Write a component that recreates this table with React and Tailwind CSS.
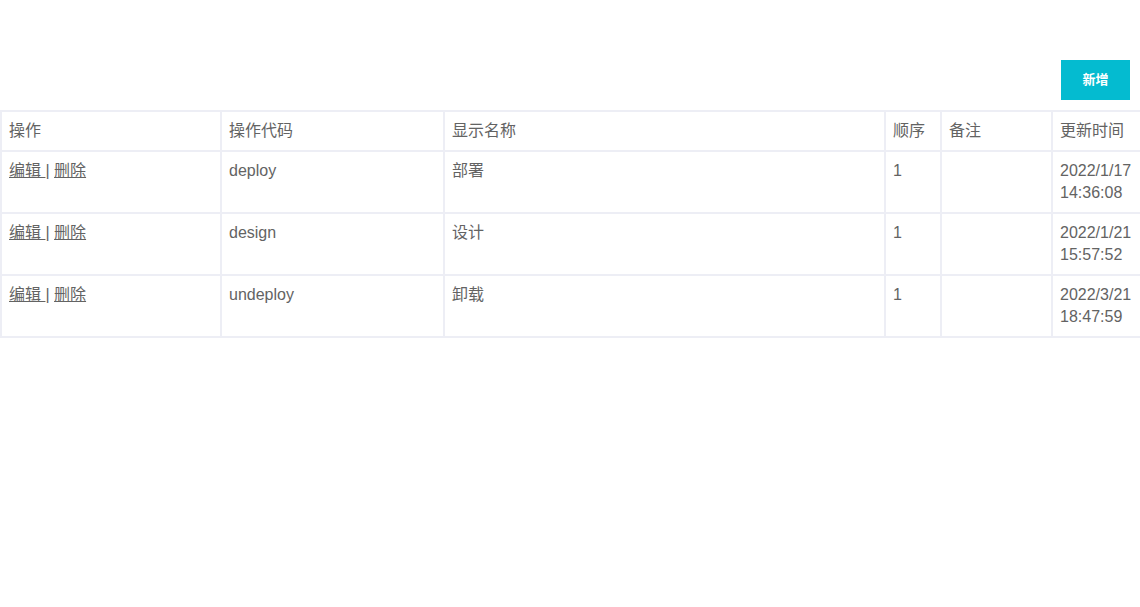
import React from "react";

const rows = [
  { code: "deploy", name: "部署", order: "1", note: "", d: "2022/1/17", t: "14:36:08" },
  { code: "design", name: "设计", order: "1", note: "", d: "2022/1/21", t: "15:57:52" },
  { code: "undeploy", name: "卸载", order: "1", note: "", d: "2022/3/21", t: "18:47:59" },
];

const cell = "border-2 border-[#edeef5] px-[7px] py-[8px] align-top text-left font-normal leading-[22px]";

export default function App() {
  return (
    <div className="w-[1140px] min-h-[607px] bg-white text-[#636363] text-[16px]" style={{ fontFamily: '"Liberation Sans", "Noto Sans CJK SC", sans-serif' }}>
      <div className="flex justify-end pt-[60px] pr-[10px] pb-[10px]">
        <button className="w-[69px] h-[40px] bg-[#04bbd0] text-white text-[13px] font-bold">新增</button>
      </div>
      <table className="w-[1140px] table-fixed border-collapse">
        <colgroup>
          <col className="w-[220px]" />
          <col className="w-[223px]" />
          <col className="w-[441px]" />
          <col className="w-[56px]" />
          <col className="w-[111px]" />
          <col className="w-[89px]" />
        </colgroup>
        <thead>
          <tr>
            <th className={cell}>操作</th>
            <th className={cell}>操作代码</th>
            <th className={cell}>显示名称</th>
            <th className={cell}>顺序</th>
            <th className={cell}>备注</th>
            <th className={cell}>更新时间</th>
          </tr>
        </thead>
        <tbody>
          {rows.map((r) => (
            <tr key={r.code}>
              <td className={cell}>
                <span className="underline">编辑 </span>| <span className="underline">删除</span>
              </td>
              <td className={cell}>{r.code}</td>
              <td className={cell}>{r.name}</td>
              <td className={cell}>{r.order}</td>
              <td className={cell}>{r.note}</td>
              <td className={cell}>
                {r.d}
                <br />
                {r.t}
              </td>
            </tr>
          ))}
        </tbody>
      </table>
    </div>
  );
}
